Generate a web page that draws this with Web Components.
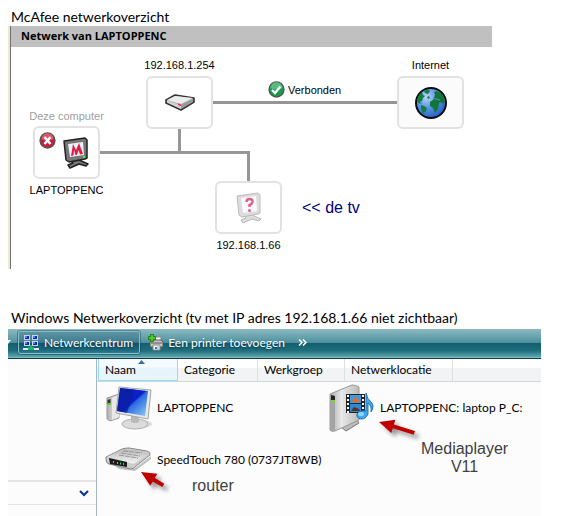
<!DOCTYPE html>
<html lang="nl">
<head>
    <meta charset="UTF-8">
    <meta name="viewport" content="width=device-width, initial-scale=1.0">
    <title>Netwerkoverzicht</title>
    <style>
        body {
            margin: 0;
            background: #fff;
            color: #000;
            font-family: "Liberation Sans", Arial, sans-serif;
        }
    </style>
</head>
<body>

    <overview-page>
        <overview-section heading="McAfee netwerkoverzicht">
            <network-panel heading="Netwerk van LAPTOPPENC">
                <network-node style="--x: 169px; --y: 32px" label="192.168.1.254" icon="modem"></network-node>
                <network-node style="--x: 420px; --y: 32px" label="Internet" icon="globe" tinted></network-node>
                <network-node style="--x: 56px; --y: 81px" label="LAPTOPPENC" caption="Deze computer" icon="monitor" alert below></network-node>
                <network-node style="--x: 238px; --y: 132px" label="192.168.1.66" icon="unknown" below></network-node>
                <link-status style="--x: 257px; --y: 34px">Verbonden</link-status>
                <free-note style="--x: 291px; --y: 152px; color: #000080">&lt;&lt; de tv</free-note>
            </network-panel>
        </overview-section>

        <overview-section heading="Windows Netwerkoverzicht (tv met IP adres 192.168.1.66 niet zichtbaar)" compact>
            <explorer-window>
                <tool-button slot="tools" icon="network" active>Netwerkcentrum</tool-button>
                <tool-button slot="tools" icon="printer">Een printer toevoegen</tool-button>

                <column-header slot="columns" style="--w: 80px" sorted>Naam</column-header>
                <column-header slot="columns" style="--w: 80px">Categorie</column-header>
                <column-header slot="columns" style="--w: 87px">Werkgroep</column-header>
                <column-header slot="columns" style="--w: 108px">Netwerklocatie</column-header>

                <device-tile icon="computer">LAPTOPPENC</device-tile>
                <device-tile icon="media">LAPTOPPENC: laptop P_C:</device-tile>
                <device-tile icon="router">SpeedTouch 780 (0737JT8WB)</device-tile>

                <red-arrow slot="notes" style="--x: 44px; --y: 113px"></red-arrow>
                <free-note slot="notes" style="--x: 95px; --y: 118px">router</free-note>
                <red-arrow slot="notes" style="--x: 282px; --y: 63px" flat></red-arrow>
                <free-note slot="notes" style="--x: 324px; --y: 81px">Mediaplayer<br>V11</free-note>
            </explorer-window>
        </overview-section>
    </overview-page>

    <script>
        const ICONS = {
            modem: `<svg width="32" height="18" viewBox="0 0 32 18">
                <path d="M2 6 L11 1 L30 4 V8 L17 16 L2 9 Z" fill="#aaa" stroke="#333" stroke-width="1.6" stroke-linejoin="round"/>
                <path d="M3 6 L11 2 L29 4 L17 10 Z" fill="#ececec"/>
                <path d="M3 6.500 L17 11 V15 L3 8.500 Z" fill="#d2d2d2"/>
                <path d="M17 11 L29 5 V8 L17 15 Z" fill="#999"/>
                <path d="M14 10 l3 1.500" stroke="#e0305a" stroke-width="1.500"/>
            </svg>`,
            globe: `<svg width="34" height="34" viewBox="0 0 34 34">
                <defs><radialGradient id="sea" cx=".35" cy=".3" r=".75">
                    <stop offset="0" stop-color="#b8d4ff"/><stop offset=".5" stop-color="#5a90e4"/><stop offset="1" stop-color="#2060c4"/>
                </radialGradient></defs>
                <circle cx="17" cy="17" r="15" fill="url(#sea)" stroke="#0a0a14" stroke-width="2"/>
                <path d="M3 14 L5 9 L8 6 L9 9 L11 10 L9 12 L8 15 L6 16 L8 18 L4 17 Z M10 5 L14 3.500 L16 5 L14 8 L11 7 Z M13 11 l2-1 l1 2 l-2 1z" fill="#0f8040"/>
                <path d="M7 19 L10 20 L13 22 L12 25 L9 28 L8 25 L7 22 Z" fill="#0f8040"/>
                <path d="M21 9 L20 6 L23 5 L28 8 L31 14 L30 18 L28 17 L26 16 L25 18 L24 23 L21 27 L19 22 L16 20 L16 16 L19 14 Z" fill="#0f7838"/>
                <path d="M20 12.500 L26 14" stroke="#5a90e4"/>
            </svg>`,
            monitor: `<svg width="28" height="32" viewBox="0 0 28 32">
                <path d="M9 24 L17 23 L26 27 L24 29 L17 27 L8 31 L6 28 L11 26 Z" fill="#777" stroke="#222" stroke-width="1.500" stroke-linejoin="round"/>
                <path d="M2 4 L23 1 L25 3 L25 21 L23 22 L7 25 L4 23 Z" fill="#777" stroke="#222" stroke-width="1.500" stroke-linejoin="round"/>
                <path d="M6 7 L21 5 L22 18 L8 20 Z" fill="#eef1fa"/>
                <path d="M9 19 L11 7 L14 13 L17 6 L21 17 L18 17.500 L16.500 13 L15 18 L13.500 18 L12 13 L11.500 18.500 Z" fill="#dc1e46"/>
                <path d="M21 20h2" stroke="#3f3" stroke-width="2"/>
            </svg>`,
            unknown: `<svg width="28" height="32" viewBox="0 0 28 32">
                <path d="M9 24 L17 23 L26 27 L24 29 L17 27 L8 31 L6 28 L11 26 Z" fill="#ddd" stroke="#b8b8b8" stroke-linejoin="round"/>
                <path d="M2 4 L23 1 L25 3 L25 21 L23 22 L7 25 L4 23 Z" fill="#ddd" stroke="#bbb" stroke-linejoin="round"/>
                <path d="M6 6 L21 4 L22 19 L8 21 Z" fill="#fafaff"/>
                <path d="M11.500 10 Q11.500 7 14.500 7 Q18 7 17.500 10 Q17 12 14.500 13 L14.500 15" fill="none" stroke="#e0608c" stroke-width="2.500"/>
                <circle cx="14.500" cy="18.500" r="1.500" fill="#e0608c"/>
            </svg>`,
            error: `<svg width="17" height="17" viewBox="0 0 17 17">
                <circle cx="8.500" cy="8.500" r="7.500" fill="#c81e3c" stroke="#555" stroke-width="1.300"/>
                <path d="M2.500 7 a6 6 0 0 1 12 0 Q8 10 2.500 7 Z" fill="#e8788a" opacity=".6"/>
                <path d="M5.500 5 L11.500 12 M11.500 5 L5.500 12" stroke="#fff" stroke-width="2.500"/>
            </svg>`,
            ok: `<svg width="17" height="17" viewBox="0 0 17 17">
                <circle cx="8.500" cy="8.500" r="7.500" fill="#1a9a50" stroke="#555" stroke-width="1.300"/>
                <path d="M2.500 7 a6 6 0 0 1 12 0 Q8 10 2.500 7 Z" fill="#7fd49c" opacity=".6"/>
                <path d="M4 9 L7 12 L12.500 5.500" fill="none" stroke="#fff" stroke-width="2.300"/>
            </svg>`,
            network: `<svg width="16" height="17" viewBox="0 0 16 17">
                <g stroke="#c8d8e8" stroke-width="1" fill="#1428b4">
                    <rect x="1.500" y="1.500" width="5" height="4"/><rect x="9.500" y="1.500" width="5" height="4"/>
                    <rect x="1.500" y="7.500" width="5" height="4"/><rect x="9.500" y="7.500" width="5" height="4"/>
                </g>
                <path d="M2 2h2v2H2z M10 2h2v2h-2z M2 8h2v2H2z M10 8h2v2h-2z" fill="#5a78ff"/>
                <path d="M0 14h16v2H0z" fill="#e4e4e4"/>
                <path d="M7 11h2v2h2v3H5v-3h2z" fill="#1ab46a"/>
            </svg>`,
            printer: `<svg width="16" height="17" viewBox="0 0 16 17">
                <path d="M5 3h8v5H5z" fill="#fff" stroke="#888"/>
                <path d="M2 8 L4 6 H13 L15 8 V13 H2 Z" fill="#c8c8c8" stroke="#555"/>
                <path d="M3 9h11" stroke="#555"/>
                <path d="M5 11h7v5H5z" fill="#f8f8f8" stroke="#888"/>
                <path d="M7 13h2v2H7z" fill="#3c78c8"/><path d="M9 12h2v3H9z" fill="#ccc"/>
                <path d="M2.500 .5h3v2h2v3h-2v2h-3v-2h-2v-3h2z" fill="#50c828" stroke="#208010"/>
            </svg>`,
            computer: `<svg width="48" height="44" viewBox="0 0 48 44">
                <defs>
                    <linearGradient id="screen" x1="0" y1="0" x2="1" y2="1">
                        <stop offset="0" stop-color="#0a28b4"/><stop offset=".5" stop-color="#0a1ec8"/><stop offset=".55" stop-color="#2d6ae0"/><stop offset="1" stop-color="#90d0f8"/>
                    </linearGradient>
                    <linearGradient id="tower"><stop offset="0" stop-color="#b0b0b0"/><stop offset="1" stop-color="#eee"/></linearGradient>
                </defs>
                <ellipse cx="36" cy="38" rx="11" ry="4" fill="#ddd"/>
                <path d="M2 12 L14 8 V32 L5 35 L2 33 Z" fill="url(#tower)" stroke="#999"/>
                <path d="M7 12 L14 9 V31 L7 34 Z" fill="#e8e8e8"/>
                <path d="M2.500 14 L5.500 13 V17 L2.500 18 Z" fill="#333"/><path d="M3 17h3v2H3z" fill="#5fd02c"/>
                <ellipse cx="30" cy="38" rx="13" ry="5" fill="#dcdcdc" stroke="#b0b0b0"/>
                <path d="M26 29 h8 v7 q-4 2 -8 0 z" fill="#b8b8b8"/>
                <path d="M14 1 L46 4 L43 33 L11 27 Z" fill="#e8e8e8" stroke="#a4a4a4"/>
                <path d="M15 2 L43 5 L40 30 L12 25 Z" fill="url(#screen)"/>
                <path d="M15 2 L30 3.500 L22 27 L12 25 Z" fill="#0a1ea0" opacity=".7"/>
            </svg>`,
            media: `<svg width="48" height="48" viewBox="0 0 48 48">
                <defs><linearGradient id="box"><stop offset="0" stop-color="#aaa"/><stop offset=".4" stop-color="#e8e8e8"/><stop offset="1" stop-color="#bbb"/></linearGradient></defs>
                <path d="M13 43 L29 36 L31 39 L18 47 Z" fill="#bbb" stroke="#777"/>
                <path d="M2 10 L24 1 Q28 1 31 3 V36 L7 47 Q3 48 2 46 Z" fill="url(#box)" stroke="#999"/>
                <path d="M2 10 L7 12 V47 Q2 48 2 45 Z" fill="#a4a4a4"/>
                <path d="M3 11 L7 12 V18 L3 17 Z" fill="#222"/><path d="M3 16h4v2H3z" fill="#74dc20"/>
                <path d="M18 10h19v19H18z" fill="#222"/>
                <path d="M22 11h11v8H22z" fill="#4898d8"/><path d="M22 20h11v8H22z" fill="#2e88d0"/>
                <path d="M24 18 l4-5 4 5z" fill="#e86a20"/><path d="M23 27 l3-4 5 2 1 2z" fill="#583020"/>
                <path d="M20 11v18 M35 11v18" stroke="#fff" stroke-width="2" stroke-dasharray="2 2"/>
                <path d="M38 9 Q39 15 43 18 Q47 22 43 28 Q44 22 40 19 V30 Q38 35 33 35 Q28 34 29 30 Q32 26 38 27 Z" fill="#3fa8ec" stroke="#1c74bc"/>
                <ellipse cx="33" cy="30" rx="3" ry="2" fill="#8cd4fc"/>
            </svg>`,
            router: `<svg width="48" height="28" viewBox="0 0 48 28">
                <defs><linearGradient id="case" x2="0" y2="1"><stop offset="0" stop-color="#b8b8b8"/><stop offset="1" stop-color="#f4f4f4"/></linearGradient></defs>
                <path d="M3 15 L14 23 L30 25 L46 13 L46 10 L30 22 Z" fill="#888" opacity=".5"/>
                <path d="M1 11 L17 3 Q20 2 24 2 L42 5 Q46 6 45 9 L31 20 Q29 23 26 23 L4 18 Q1 17 1 14 Z" fill="#ccc" stroke="#888"/>
                <path d="M2 11 L18 3 L43 6 Q44 8 42 9 L30 17 Q28 18 25 17 Z" fill="url(#case)"/>
                <path d="M18 5l19 2 M16 7l19 3 M14 9l19 3" stroke="#999" stroke-dasharray="5 1"/>
                <path d="M4 12 L22 16 V21 L5 18 Z" fill="#1c1c1c"/>
                <path d="M8 16h1 M12 17h1 M15 17.500h1 M18 18h1" stroke="#2ce06c" stroke-width="2"/>
            </svg>`
        };

        // Base class: fills an open shadow root with the element's own styles and markup
        class BaseElement extends HTMLElement {
            connectedCallback() {
                if (this.shadowRoot) return;
                this.attachShadow({ mode: 'open' }).innerHTML = this.template();
            }

            attr(name) {
                return this.getAttribute(name) || '';
            }
        }

        class OverviewPage extends BaseElement {
            template() {
                return `
                    <style>
                        :host {
                            display: flex;
                            flex-direction: column;
                            gap: 40px;
                            padding: 8px 26px 0 8px;
                        }
                    </style>
                    <slot></slot>
                `;
            }
        }

        class OverviewSection extends BaseElement {
            template() {
                return `
                    <style>
                        :host { display: block; }
                        h2 {
                            margin: 0 0 0 3px;
                            font: 14px/18px Lato, Carlito, sans-serif;
                            white-space: nowrap;
                        }
                        :host([compact]) h2 { margin-bottom: 2px; }
                    </style>
                    <h2>${this.attr('heading')}</h2>
                    <slot></slot>
                `;
            }
        }

        class NetworkPanel extends BaseElement {
            template() {
                return `
                    <style>
                        :host {
                            display: block;
                            margin-right: 49px;
                            border-left: 2px solid #ece9d0;
                        }
                        .panel { border-left: 1px solid #707070; }
                        h3 {
                            margin: 0;
                            padding: 0 10px 1px;
                            background: #c0c0c0;
                            font: bold 11px/20px "Open Sans", "Noto Sans", sans-serif;
                        }
                        .canvas {
                            position: relative;
                            height: 222px;
                        }
                        .lines {
                            position: absolute;
                            inset: 0;
                            width: 100%;
                            height: 100%;
                        }
                    </style>
                    <div class="panel">
                        <h3>${this.attr('heading')}</h3>
                        <div class="canvas">
                            <svg class="lines" fill="none" stroke="#969696" stroke-width="3">
                                <path d="M169 55.500H420 M168.500 55V105 M56 105.500H237.500V150"/>
                            </svg>
                            <slot></slot>
                        </div>
                    </div>
                `;
            }
        }

        // A device on the map; --x is its centre, --y the top of its box
        class NetworkNode extends BaseElement {
            template() {
                const label = `<div class="label">${this.attr('label')}</div>`;
                const below = this.hasAttribute('below');
                return `
                    <style>
                        :host {
                            position: absolute;
                            left: var(--x);
                            top: var(--y);
                            display: flex;
                            flex-direction: column;
                            align-items: center;
                            width: 67px;
                            margin-left: -34px;
                            font-size: 11px;
                            line-height: 14px;
                            white-space: nowrap;
                        }
                        :host(:not([below])) { margin-top: -21px; }
                        :host([caption]) { margin-top: -19px; }
                        .box {
                            position: relative;
                            display: flex;
                            align-items: center;
                            justify-content: center;
                            box-sizing: border-box;
                            width: 100%;
                            height: 53px;
                            margin: 2px 0 4px;
                            border: 2px solid #e2e2e2;
                            border-radius: 6px;
                            background: #fff;
                        }
                        :host([tinted]) .box { background: #fbfbfb; }
                        :host([alert]) .box { justify-content: flex-end; padding-right: 8px; }
                        .label { margin-bottom: 2px; }
                        .caption { color: #a0a0a0; margin-bottom: 1px; }
                        .alert { position: absolute; left: 4px; top: 4px; }
                        svg { display: block; }
                    </style>
                    ${this.attr('caption') ? `<div class="caption">${this.attr('caption')}</div>` : ''}
                    ${below ? '' : label}
                    <div class="box">
                        ${this.hasAttribute('alert') ? `<span class="alert">${ICONS.error}</span>` : ''}
                        ${ICONS[this.attr('icon')]}
                    </div>
                    ${below ? label : ''}
                `;
            }
        }

        class LinkStatus extends BaseElement {
            template() {
                return `
                    <style>
                        :host {
                            position: absolute;
                            left: var(--x);
                            top: var(--y);
                            display: flex;
                            align-items: center;
                            gap: 3px;
                            font-size: 11px;
                        }
                        svg { display: block; }
                    </style>
                    ${ICONS.ok}<span><slot></slot></span>
                `;
            }
        }

        class FreeNote extends BaseElement {
            template() {
                return `
                    <style>
                        :host {
                            position: absolute;
                            left: var(--x);
                            top: var(--y);
                            color: #404040;
                            font: 16px/18px "Liberation Sans", Arial, sans-serif;
                            text-align: center;
                            white-space: nowrap;
                        }
                    </style>
                    <slot></slot>
                `;
            }
        }

        class RedArrow extends BaseElement {
            template() {
                const turn = this.hasAttribute('flat') ? 17 : 31;
                return `
                    <style>
                        :host {
                            position: absolute;
                            left: var(--x);
                            top: var(--y);
                        }
                        svg {
                            display: block;
                            overflow: visible;
                            filter: drop-shadow(4px 4px 2px rgba(0, 0, 0, 0.4));
                        }
                    </style>
                    <svg width="36" height="24" aria-hidden="true">
                        <path transform="rotate(${turn})" d="M0 0 L15 -7 V-2 H${this.hasAttribute('flat') ? 37 : 26} V2 H15 V7 Z" fill="#c00000"/>
                    </svg>
                `;
            }
        }

        class ExplorerWindow extends BaseElement {
            template() {
                return `
                    <style>
                        :host {
                            display: block;
                            background: #fcfcfc;
                            font: 12px/16px Lato, "Open Sans", sans-serif;
                        }
                        .toolbar {
                            display: flex;
                            align-items: center;
                            gap: 4px;
                            box-sizing: border-box;
                            height: 30px;
                            padding-bottom: 2px;
                            border-bottom: 1px solid #0c3c4c;
                            background: linear-gradient(#8cbac2, #4c909c 48%, #125e70 49%, #206e7c 75%, #5ca4ac 96%, #a0ccd0);
                            color: #fff;
                        }
                        .edge { width: 6px; height: 5px; overflow: hidden; }
                        .edge svg { display: block; }
                        .more {
                            padding: 0 4px;
                            border: 0;
                            background: none;
                        }
                        .more svg { display: block; }
                        .main { display: flex; }
                        .side {
                            box-sizing: border-box;
                            width: 89px;
                            height: 157px;
                            padding-top: 121px;
                            border-right: 1px solid #a4b8c8;
                        }
                        .expand {
                            display: flex;
                            align-items: center;
                            justify-content: flex-end;
                            box-sizing: border-box;
                            width: 100%;
                            height: 25px;
                            padding: 0 7px;
                            border: solid #e4e4e4;
                            border-width: 2px 0 1px;
                            background: none;
                        }
                        .view {
                            position: relative;
                            flex: 1;
                            min-width: 0;
                        }
                        .columns {
                            display: flex;
                            height: 22px;
                            padding-left: 1px;
                            border-bottom: 1px solid #d5d5d5;
                            background: linear-gradient(#fff 40%, #f2f3f5 41%);
                        }
                        .tiles {
                            display: grid;
                            grid-template-columns: 223px 1fr;
                            grid-auto-rows: 52px;
                            padding-left: 8px;
                        }
                    </style>
                    <div class="toolbar">
                        <span class="edge"><svg width="6" height="5"><path d="M-3 0H3L0 4z" fill="#fff"/></svg></span>
                        <slot name="tools"></slot>
                        <button class="more" aria-label="Meer opdrachten">
                            <svg width="9" height="7" fill="none" stroke="#fff" stroke-width="1.500"><path d="M1 .5 L4 3.500 L1 6.500 M5 .5 L8 3.500 L5 6.500"/></svg>
                        </button>
                    </div>
                    <div class="main">
                        <div class="side">
                            <button class="expand" aria-label="Uitvouwen">
                                <svg width="10" height="7" fill="none" stroke="#0a3296" stroke-width="2"><path d="M1 1 L5 5 L9 1"/></svg>
                            </button>
                        </div>
                        <div class="view">
                            <div class="columns"><slot name="columns"></slot></div>
                            <div class="tiles"><slot></slot></div>
                            <slot name="notes"></slot>
                        </div>
                    </div>
                `;
            }
        }

        class ToolButton extends BaseElement {
            template() {
                return `
                    <style>
                        :host { display: block; }
                        button {
                            display: flex;
                            align-items: center;
                            gap: 4px;
                            height: 23px;
                            padding: 0 4px 0 3px;
                            border: 1px solid transparent;
                            border-radius: 2px;
                            background: none;
                            color: #fff;
                            font: inherit;
                            text-shadow: 0 1px 2px rgba(0, 30, 50, 0.7);
                            white-space: nowrap;
                        }
                        :host([active]) button {
                            gap: 5px;
                            padding: 0 6px 0 4px;
                            border-color: #88bcc8;
                            outline: 1px solid rgba(10, 60, 80, 0.4);
                            background: linear-gradient(rgba(30, 90, 120, 0.35) 48%, rgba(0, 60, 100, 0.35) 49%, rgba(40, 120, 150, 0.3));
                        }
                    </style>
                    <button>${ICONS[this.attr('icon')]}<span><slot></slot></span></button>
                `;
            }
        }

        class ColumnHeader extends BaseElement {
            template() {
                return `
                    <style>
                        :host {
                            position: relative;
                            display: block;
                            box-sizing: border-box;
                            width: var(--w);
                            border-right: 1px solid #dedfe1;
                        }
                        button {
                            width: 100%;
                            height: 100%;
                            padding: 0 6px;
                            border: 0;
                            background: none;
                            color: #000;
                            font: inherit;
                            text-align: left;
                        }
                        :host([sorted]) {
                            border: 1px solid #96d9f9;
                            border-top: 0;
                            background: linear-gradient(#f4fafe 40%, #e6f4fc 41%);
                        }
                        .sort {
                            position: absolute;
                            left: 50%;
                            top: 1px;
                        }
                    </style>
                    <button><slot></slot></button>
                    ${this.hasAttribute('sorted') ? '<svg class="sort" width="7" height="4"><path d="M0 4 L3.500 0 L7 4Z" fill="#3c7090"/></svg>' : ''}
                `;
            }
        }

        class DeviceTile extends BaseElement {
            template() {
                return `
                    <style>
                        :host {
                            display: flex;
                            align-items: center;
                            gap: 4px;
                            white-space: nowrap;
                        }
                        svg { display: block; flex: none; }
                    </style>
                    ${ICONS[this.attr('icon')]}<span><slot></slot></span>
                `;
            }
        }

        customElements.define('overview-page', OverviewPage);
        customElements.define('overview-section', OverviewSection);
        customElements.define('network-panel', NetworkPanel);
        customElements.define('network-node', NetworkNode);
        customElements.define('link-status', LinkStatus);
        customElements.define('free-note', FreeNote);
        customElements.define('red-arrow', RedArrow);
        customElements.define('explorer-window', ExplorerWindow);
        customElements.define('tool-button', ToolButton);
        customElements.define('column-header', ColumnHeader);
        customElements.define('device-tile', DeviceTile);
    </script>
</body>
</html>
